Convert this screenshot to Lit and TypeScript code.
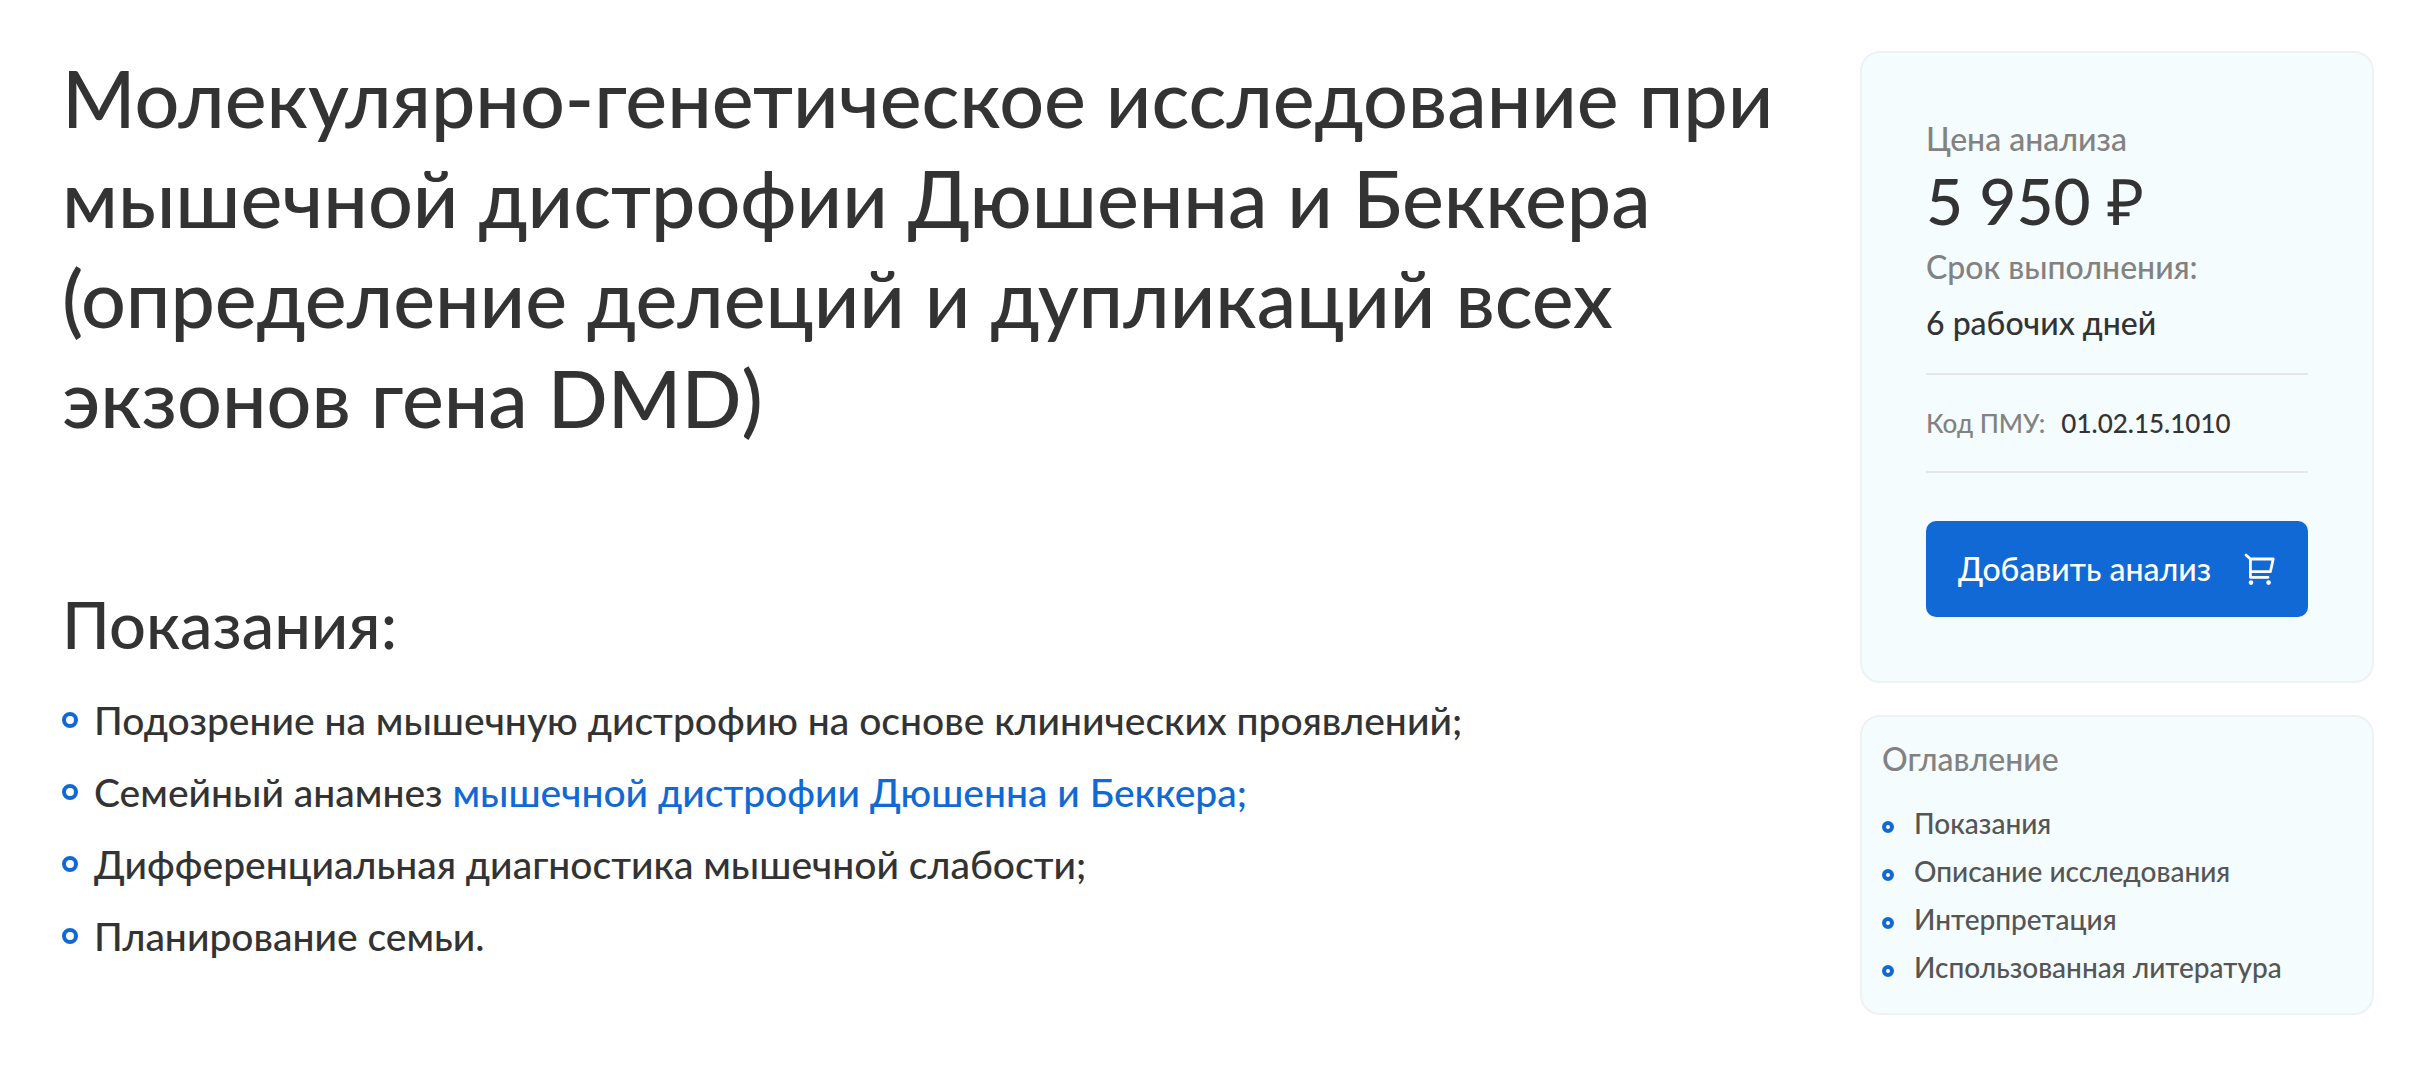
import { LitElement, html, css } from 'lit';
import { customElement, property } from 'lit/decorators.js';

interface Indication {
  text: string;
  link?: string;
}

const INDICATIONS: Indication[] = [
  { text: 'Подозрение на мышечную дистрофию на основе клинических проявлений;' },
  { text: 'Семейный анамнез ', link: 'мышечной дистрофии Дюшенна и Беккера;' },
  { text: 'Дифференциальная диагностика мышечной слабости;' },
  { text: 'Планирование семьи.' },
];

const CONTENTS = [
  { id: 'indications', label: 'Показания' },
  { id: 'description', label: 'Описание исследования' },
  { id: 'interpretation', label: 'Интерпретация' },
  { id: 'literature', label: 'Использованная литература' },
];

@customElement('price-card')
class PriceCard extends LitElement {
  @property() price = '';
  @property() term = '';
  @property() code = '';

  static styles = css`
    :host {
      display: block;
      box-sizing: border-box;
      padding: 64px;
      border: 2px solid #eff1f2;
      border-radius: 20px;
      background: #f4fcfe;
      font-size: 32px;
      line-height: 44px;
    }
    dl, dd, dt { margin: 0; }
    dt { color: #828282; }
    .price { font-size: 64px; line-height: 80px; margin-bottom: 4px; }
    .term { margin-top: 12px; }
    .code {
      display: flex;
      gap: 16px;
      margin-top: 28px;
      padding: 26px 0;
      border-top: 2px solid #e6e6e6;
      border-bottom: 2px solid #e6e6e6;
      font-size: 26px;
    }
    .add {
      display: flex;
      align-items: center;
      justify-content: space-between;
      width: 100%;
      margin-top: 48px;
      padding: 26px 32px;
      border: 0;
      border-radius: 10px;
      background: #1169d6;
      color: #fff;
      font: inherit;
      cursor: pointer;
    }
    .cart { width: 32px; height: 32px; }
  `;

  render() {
    return html`
      <dl>
        <dt>Цена анализа</dt>
        <dd class="price">${this.price}</dd>
        <dt>Срок выполнения:</dt>
        <dd class="term">${this.term}</dd>
      </dl>
      <dl class="code">
        <dt>Код ПМУ:</dt>
        <dd>${this.code}</dd>
      </dl>
      <button class="add" type="button">
        <span>Добавить анализ</span>
        <svg class="cart" viewBox="0 0 32 32" fill="none" stroke="#fff" stroke-width="2.8"
          stroke-linecap="round" stroke-linejoin="round" aria-hidden="true">
          <path d="M2 2l4.4 4h22.8l-2.8 12.7H6.4M6.4 6v18.3H24" />
          <circle cx="7" cy="29.6" r="2.3" fill="#fff" stroke="none" />
          <circle cx="24.6" cy="29.6" r="2.3" fill="#fff" stroke="none" />
        </svg>
      </button>
    `;
  }
}

@customElement('contents-card')
class ContentsCard extends LitElement {
  static styles = css`
    :host {
      display: block;
      box-sizing: border-box;
      padding: 22px 20px;
      border: 2px solid #eff1f2;
      border-radius: 20px;
      background: #f4fcfe;
    }
    .title {
      margin: 0 0 20px;
      color: #828282;
      font-size: 32px;
      font-weight: 500;
      line-height: 40px;
    }
    .list { margin: 0; padding: 0; list-style: none; }
    .item {
      display: flex;
      align-items: center;
      gap: 20px;
      font-size: 28px;
      line-height: 48px;
    }
    .item::before {
      content: '';
      box-sizing: border-box;
      width: 12px;
      height: 12px;
      margin-top: 8px;
      border: 4px solid #1169d6;
      border-radius: 50%;
      background: #fff;
    }
    .link { color: #555; text-decoration: none; }
  `;

  render() {
    return html`
      <h2 class="title">Оглавление</h2>
      <ul class="list">
        ${CONTENTS.map(
          (c) => html`<li class="item"><a class="link" href="#${c.id}">${c.label}</a></li>`
        )}
      </ul>
    `;
  }
}

@customElement('app-root')
class AppRoot extends LitElement {
  static styles = css`
    :host {
      display: block;
      background: #fff;
      color: #333;
      font-family: Lato, 'Liberation Sans', sans-serif;
      font-weight: 500;
    }
    .page {
      display: grid;
      grid-template-columns: minmax(0, 1fr) 514px;
      gap: 24px;
      padding: 0 56px 0 62px;
    }
    .main { padding-top: 48px; }
    .side {
      display: flex;
      flex-direction: column;
      gap: 32px;
      padding: 51px 0;
    }
    .title {
      margin: 0 0 136px;
      font-size: 79px;
      font-weight: 500;
      line-height: 100px;
    }
    .subtitle {
      margin: 0 0 32px;
      font-size: 65px;
      font-weight: 500;
      line-height: 80px;
    }
    .list {
      display: flex;
      flex-direction: column;
      gap: 24px;
      margin: 0;
      padding: 0;
      list-style: none;
      font-size: 39px;
      line-height: 48px;
    }
    .item {
      display: flex;
      align-items: center;
      gap: 16px;
    }
    .item::before {
      content: '';
      box-sizing: border-box;
      flex: none;
      width: 16px;
      height: 16px;
      border: 4px solid #1169d6;
      border-radius: 50%;
    }
    .link { color: #1169d6; text-decoration: none; }
  `;

  render() {
    return html`
      <div class="page">
        <main class="main">
          <h1 class="title">
            Молекулярно-генетическое исследование при мышечной дистрофии Дюшенна и Беккера
            (определение делеций и дупликаций всех экзонов гена DMD)
          </h1>
          <h2 class="subtitle" id="indications">Показания:</h2>
          <ul class="list">
            ${INDICATIONS.map(
              (i) => html`<li class="item"><span>${i.text}${
                i.link ? html`<a class="link" href="#description">${i.link}</a>` : ''
              }</span></li>`
            )}
          </ul>
        </main>
        <aside class="side">
          <price-card price="5 950 ₽" term="6 рабочих дней" code="01.02.15.1010"></price-card>
          <contents-card></contents-card>
        </aside>
      </div>
    `;
  }
}
